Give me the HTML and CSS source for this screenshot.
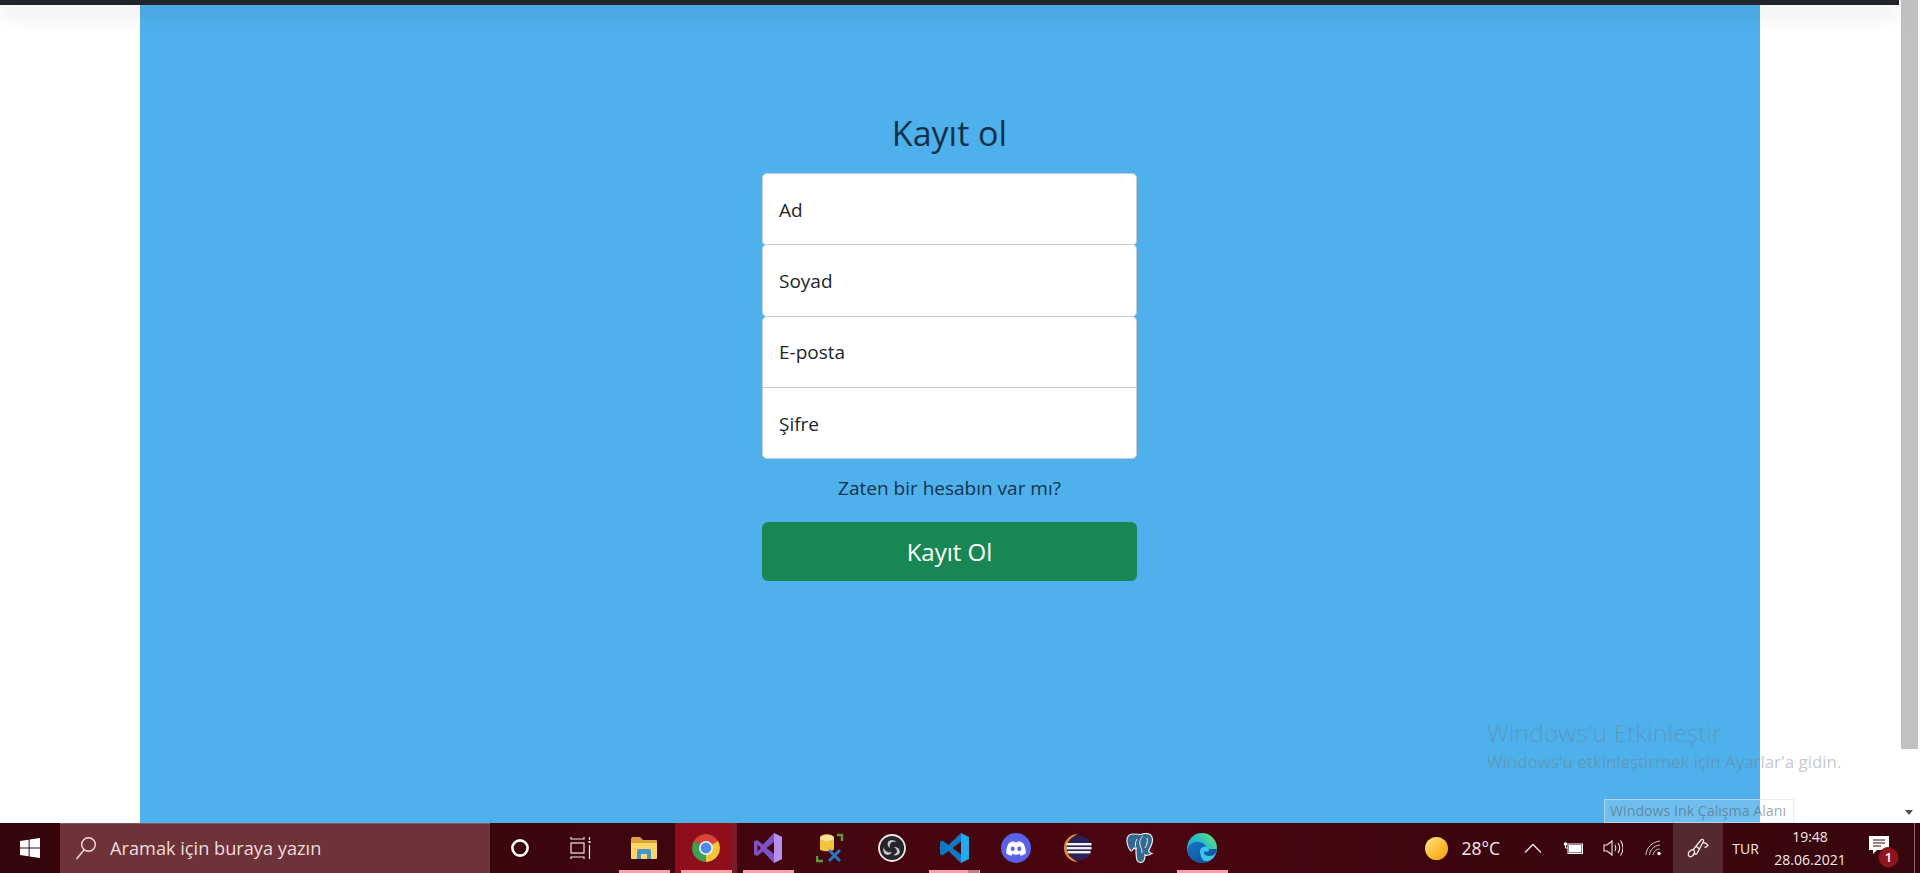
FILE: index.html
```html
<!DOCTYPE html>
<html lang="tr">
<head>
<meta charset="utf-8">
<title>Kayıt ol</title>
<link rel="stylesheet" href="styles.css">
</head>
<body>
<div class="desktop">
  <div class="browser">
    <div class="page">
      <div class="topbar"></div>
      <main class="hero">
        <form class="signup">
          <h1 class="signup-title">Kayıt ol</h1>
          <div class="fields">
            <label class="field">Ad</label>
            <label class="field">Soyad</label>
            <label class="field field-join-bottom">E-posta</label>
            <label class="field field-join-top">Şifre</label>
          </div>
          <a class="signin-link">Zaten bir hesabın var mı?</a>
          <button class="submit" type="button">Kayıt Ol</button>
        </form>
      </main>
    </div>
    <div class="scrollbar">
      <div class="thumb"></div>
      <div class="arrow"></div>
    </div>
  </div>

  <div class="watermark">
    <div class="wm-title">Windows'u Etkinleştir</div>
    <div class="wm-sub">Windows'u etkinleştirmek için Ayarlar'a gidin.</div>
  </div>
  <div class="ink-tip">Windows Ink Çalışma Alanı</div>

  <footer class="taskbar">
    <div class="start">
      <svg width="20" height="20" viewBox="0 0 20 20" fill="#fff"><polygon points="0,3 8.6,1.7 8.6,9.5 0,9.5"/><polygon points="9.6,1.5 20,0 20,9.5 9.6,9.5"/><polygon points="0,10.5 8.6,10.5 8.6,18.3 0,17"/><polygon points="9.6,10.5 20,10.5 20,20 9.6,18.5"/></svg>
    </div>
    <div class="search">
      <svg width="22" height="24" viewBox="0 0 22 24" fill="none" stroke="#f3dfe0" stroke-width="1.4"><circle cx="13.5" cy="8.5" r="6.8"/><line x1="9" y1="14" x2="1.5" y2="23"/></svg>
      <span class="search-text">Aramak için buraya yazın</span>
    </div>
    <div class="tb-tool">
      <svg width="20" height="20" viewBox="0 0 20 20" fill="none" stroke="#fff" stroke-width="2.6"><circle cx="10" cy="10" r="7.6"/></svg>
    </div>
    <div class="tb-tool">
      <svg width="22" height="24" viewBox="0 0 22 24" fill="none" stroke="#f3e6e6" stroke-width="1.2"><path d="M1 1v2h13V1"/><rect x="1" y="7" width="13" height="10"/><path d="M1 23v-2h13v2"/><path d="M19.5 1v3M19.5 9v14"/><path d="M18.5 6h2" stroke-width="2"/></svg>
    </div>

    <div class="tb-app run">
      <svg class="ico" width="28" height="24" viewBox="0 0 28 24"><path d="M1 3a2 2 0 0 1 2-2h7l3 3h13a1 1 0 0 1 1 1v3H1z" fill="#dca23a"/><path d="M1 7h26v15a1 1 0 0 1-1 1H2a1 1 0 0 1-1-1z" fill="#ffd768"/><path d="M7 23v-8a2 2 0 0 1 2-2h10a2 2 0 0 1 2 2v8h-4v-5h-6v5z" fill="#4a96c8"/></svg>
    </div>
    <div class="tb-app active run-multi">
      <svg class="ico" width="28" height="28" viewBox="0 0 28 28"><path d="M14 14L1.9 7A14 14 0 0 1 26.1 7z" fill="#d8443a"/><path d="M14 14L26.1 7A14 14 0 0 1 14 28z" fill="#f6c537"/><path d="M14 14L14 28A14 14 0 0 1 1.9 7z" fill="#3c9f55"/><circle cx="14" cy="14" r="7" fill="#f1f1f1"/><circle cx="14" cy="14" r="5.4" fill="#4d8bea"/></svg>
    </div>
    <div class="tb-app run">
      <svg class="ico" width="30" height="32" viewBox="0 0 30 32"><path fill-rule="evenodd" d="M21 1L10 12.500L4 8L1 9.500V22.500L4 24L10 19.500L21 31L29 27V5zM21 10V22L13.500 16zM4.500 12.500L8 16L4.500 19.500z" fill="#7f52c9"/><polygon points="21,1 29,5 29,27 21,31 21,22 21,10" fill="#b48fee"/></svg>
    </div>
    <div class="tb-app">
      <svg class="ico" width="28" height="30" viewBox="0 0 28 30" fill="none"><path d="M4 5c0-5 14-5 14 0v11c0 3-14 3-14 0z" fill="#f2c43c"/><ellipse cx="11" cy="5" rx="7" ry="3" fill="#f6e2a0"/><path d="M21 2h5v6M1 23v5h6" stroke="#5d9a3c" stroke-width="2.4"/><path d="M13 28l11-11M13 17l11 11" stroke="#2a77c0" stroke-width="3"/></svg>
    </div>
    <div class="tb-app">
      <svg class="ico" width="28" height="28" viewBox="0 0 28 28" fill="none"><circle cx="14" cy="14" r="13" fill="#26252a" stroke="#efe6e2" stroke-width="1.8"/><path d="M14 6a6 6 0 0 1 5 3c-1-1-4-2-6 0s-1 4-1 5a5 5 0 0 1-2-6 5 5 0 0 1 4-2zM21 20a6 6 0 0 1-6 1c2-.5 4-2 4-4s-2-3-3-4a5 5 0 0 1 5 2 5 5 0 0 1 0 5zM6 19a6 6 0 0 1 0-6c0 2 1 4 3.500 5s4 0 4.500-.5a5 5 0 0 1-4 3.500 5 5 0 0 1-4-2z" fill="#c9c9cd"/></svg>
    </div>
    <div class="tb-app run-multi">
      <svg class="ico" width="30" height="32" viewBox="0 0 30 32"><path fill-rule="evenodd" d="M22 1L9.500 13L3.500 8.500L1 10V22L3.500 23.500L9.500 19L22 31V22.500L13.500 16L22 9.500z" fill="#0f78c2"/><polygon points="22,1 30,5 30,27 22,31" fill="#24a8ef"/></svg>
    </div>
    <div class="tb-app">
      <svg class="ico" width="30" height="30" viewBox="0 0 30 30"><circle cx="15" cy="15" r="15" fill="#5a62e8"/><path d="M8 10c2-1 3.500-1.500 5-1.700l.6 1.100c1-.1 1.800-.1 2.800 0l.6-1.100c1.500.2 3 .7 5 1.700 2 3 3 6.500 2.700 10.500-2 1.400-3.500 2-5 2.300l-1.100-1.700c-2.700.7-4.500.7-7.200 0l-1.100 1.700c-1.500-.3-3-.9-5-2.300C5 16.500 6 13 8 10z" fill="#fff"/><ellipse cx="11.700" cy="15.800" rx="2" ry="2.300" fill="#5a62e8"/><ellipse cx="18.300" cy="15.800" rx="2" ry="2.300" fill="#5a62e8"/></svg>
    </div>
    <div class="tb-app">
      <svg class="ico" width="30" height="30" viewBox="0 0 30 30"><path d="M15 1A14 14 0 0 0 15 29 15 15 0 0 1 15 1z" fill="#e98c2c"/><circle cx="16" cy="15" r="12.500" fill="#2a2154"/><rect x="3.500" y="10" width="25" height="2.400" fill="#f2eef2"/><rect x="3.500" y="14" width="25" height="2.400" fill="#f2eef2"/><rect x="4.500" y="18" width="23" height="2.400" fill="#f2eef2"/></svg>
    </div>
    <div class="tb-app">
      <svg class="ico" width="28" height="30" viewBox="0 0 28 30"><path d="M7 1C2 1 .5 5 1 9c.5 3 2 7 3.500 8.500 1.500 1 2.500-1 3.500-2.500 1 1 1.500 1 2 1 0 4 0 8 1 11 1 2 3.500 3 5.500 2s2.500-4 2.500-7c1 1 4 0 7-1.500-2-.5-3-1-3.500-2.500 2-4 4.500-8 4-12-.5-3-3-5.500-7-5.500-2 0-3 .5-4 1C13 1.500 10 1 7 1z" fill="#33688f" stroke="#e9eef2" stroke-width="1.200"/><path d="M11 6c-2 3-2 7-.5 10M17 3c-2 2-4 5-3 9 1 3 2 4 2 8M21 5c1 3 0 7-2 10" fill="none" stroke="#e9eef2" stroke-width="1"/></svg>
    </div>
    <div class="tb-app run">
      <svg class="ico" width="30" height="30" viewBox="0 0 30 30"><defs><linearGradient id="edgeTop" x1="0" y1="1" x2="1" y2="0"><stop offset="0" stop-color="#1a87d0"/><stop offset=".6" stop-color="#28c3c2"/><stop offset="1" stop-color="#7fe06a"/></linearGradient><linearGradient id="edgeLow" x1="0" y1="0" x2="1" y2="1"><stop offset="0" stop-color="#1973c7"/><stop offset="1" stop-color="#0b4c96"/></linearGradient></defs><circle cx="15" cy="15" r="15" fill="url(#edgeTop)"/><path d="M1 19C0 12 6 8 12 9c5 1 8 4 7 7H30c-2 9-9 14-15 14C8 30 2 25 1 19z" fill="url(#edgeLow)"/><path d="M13 18c0-3 3-5 6-4 2 .5 3 2 3 4-2 1-4 0-5 1-1 2 2 4 6 4 2 0 4-1 6-3-2 6-7 9-11 8-3-1-5-6-5-10z" fill="#39c7e6"/></svg>
    </div>

    <div class="tb-spacer"></div>

    <div class="weather">
      <span class="sun"></span>
      <span class="temp">28°C</span>
    </div>
    <div class="tray-icon">
      <svg width="18" height="10" viewBox="0 0 18 10" fill="none" stroke="#f3e6e6" stroke-width="1.300"><polyline points="1,9.500 9,1.500 17,9.500"/></svg>
    </div>
    <div class="tray-icon">
      <svg width="20" height="14" viewBox="0 0 20 14" fill="none" stroke="#fff"><rect x="5" y="3" width="14.500" height="9.500" stroke-width="1"/><rect x="6" y="4" width="12.500" height="7.500" fill="#fff" stroke="none"/><circle cx="2.500" cy="3" r="1.800" fill="#fff" stroke="none"/><path d="M2.500 4v3h2.500" stroke-width="1"/></svg>
    </div>
    <div class="tray-icon">
      <svg width="20" height="18" viewBox="0 0 20 18" fill="none" stroke="#f3e6e6" stroke-width="1.100"><path d="M1 6h3l5-4v14l-5-4H1z"/><path d="M12 6c1 2 1 4 0 6M15 4c2 3 2 7 0 10M17.500 1.500c3 4.500 3 10.500 0 15"/></svg>
    </div>
    <div class="tray-icon">
      <svg width="17" height="16" viewBox="0 0 17 16" fill="none" stroke="#d9c6c8" stroke-width="1"><path d="M1 15C1 8 7 2 15 1M4.500 15C5 10 9 5.500 15 5M8 15c.5-3 3-6 6.500-6"/><circle cx="14" cy="13.500" r="1.700" fill="#fff" stroke="none"/></svg>
    </div>
    <div class="tray-pen">
      <svg width="22" height="20" viewBox="0 0 22 20" fill="none" stroke="#f5eaea" stroke-width="1.300"><path d="M7.500 14.500C7 17 4.500 19.500 2.500 18.500S1 14 3.500 12.500 8 12 7.500 14.500z"/><path d="M6 12L14 2c1-1.300 3-.5 2.500 1.200L10 15.500c-1 1.500-2.500.5-2.500-1M9.500 8.500l3.500 3"/><path d="M16 4.500c2.500.3 4 1.300 5 2.800-.8 1.200-2 1.900-3.500 2.200"/></svg>
    </div>
    <div class="tray-lang">TUR</div>
    <div class="clock">
      <span>19:48</span>
      <span>28.06.2021</span>
    </div>
    <div class="notify">
      <svg width="21" height="20" viewBox="0 0 21 20"><path d="M0 0h20v14H8l-4 4v-4H0z" fill="#fff"/><path d="M4 4h12M4 7h12M4 10h8" stroke="#3a060d" stroke-width="1"/></svg>
      <span class="badge">1</span>
    </div>
    <div class="tb-edge"></div>
    <div class="tb-end"></div>
  </footer>
</div>
</body>
</html>
```

FILE: styles.css
```css
* { box-sizing: border-box; }

html, body {
  margin: 0;
  height: 873px;
  overflow: hidden;
  background: #fff;
  font-family: "Open Sans", "Noto Sans", sans-serif;
}

.desktop {
  position: relative;
  display: flex;
  flex-direction: column;
  height: 873px;
}

.browser {
  flex: 1;
  display: flex;
  min-height: 0;
}

.page {
  flex: 1;
  display: flex;
  flex-direction: column;
  min-width: 0;
}

.topbar {
  position: relative;
  z-index: 2;
  height: 5px;
  background: #212529;
  box-shadow: 0 8px 20px rgba(0, 0, 0, 0.2);
}

.hero {
  flex: 1;
  margin: 0 139px 0 140px;
  padding: 107px 1px 0 0;
  background: #4fb1ec;
  display: flex;
  justify-content: center;
}

.signup {
  width: 375px;
  display: flex;
  flex-direction: column;
  align-items: stretch;
}

.signup-title {
  margin: 0 0 19px;
  font-size: 34px;
  line-height: 42px;
  font-weight: 400;
  text-align: center;
  color: #13304a;
}

.field {
  display: flex;
  align-items: center;
  height: 72.5px;
  margin-top: -1.25px;
  padding: 1px 16px 0;
  background: #fff;
  border: 1px solid #c6ccd2;
  border-radius: 5px;
  font-size: 19px;
  color: #212529;
}

.field:first-child { margin-top: 0; }
.field-join-bottom { border-bottom-left-radius: 0; border-bottom-right-radius: 0; }
.field-join-top { border-top-left-radius: 0; border-top-right-radius: 0; }

.signin-link {
  margin-top: 14px;
  height: 30px;
  line-height: 30px;
  font-size: 19px;
  text-align: center;
  color: #15324e;
}

.submit {
  margin-top: 19px;
  height: 59px;
  border: 0;
  border-radius: 6px;
  background: #198754;
  color: #fff;
  font-family: inherit;
  font-size: 24px;
}

.scrollbar {
  width: 21px;
  padding: 0 2px 8px;
  display: flex;
  flex-direction: column;
  justify-content: space-between;
  align-items: flex-start;
}

.thumb {
  width: 17px;
  height: 749px;
  background: #c1c1c1;
}

.arrow {
  width: 0;
  height: 0;
  margin-left: 4px;
  border-left: 4.500px solid transparent;
  border-right: 4.500px solid transparent;
  border-top: 5px solid #505050;
}

.watermark {
  position: absolute;
  left: 1487px;
  top: 716px;
  z-index: 3;
  color: rgba(110, 120, 130, 0.42);
  white-space: nowrap;
}

.wm-title {
  font-size: 24.700px;
  font-weight: 300;
  line-height: 34px;
}

.wm-sub {
  margin-top: 1px;
  font-size: 16.900px;
  line-height: 22px;
}

.ink-tip {
  position: absolute;
  left: 1604px;
  top: 799px;
  width: 190px;
  height: 24px;
  z-index: 3;
  padding-left: 5px;
  line-height: 22px;
  font-size: 14.200px;
  white-space: nowrap;
  color: rgba(90, 100, 110, 0.6);
  background: rgba(255, 255, 255, 0.18);
  border: 1px solid rgba(225, 225, 225, 0.6);
}

.taskbar {
  flex: 0 0 50px;
  display: flex;
  align-items: stretch;
  color: #f6e9ea;
  background: linear-gradient(90deg, #35060c 0%, #3d060e 30%, #4b0511 60%, #3d060e 75%, #37060c 100%);
}

.start {
  flex: 0 0 60px;
  display: flex;
  align-items: center;
  justify-content: center;
  padding-bottom: 1px;
}

.search {
  flex: 0 0 430px;
  display: flex;
  align-items: center;
  gap: 13px;
  padding: 0 0 1px 15px;
  background: #6d3339;
  border-top: 1px solid #85585d;
}

.search-text {
  font-size: 18.200px;
  color: #f0dcdd;
  white-space: nowrap;
}

.tb-tool {
  flex: 0 0 61.500px;
  display: flex;
  align-items: center;
  justify-content: center;
  padding-right: 2px;
}

.tb-app {
  position: relative;
  flex: 0 0 62px;
  display: flex;
  align-items: center;
  justify-content: center;
}

.tb-app.active { background: #8e0f1b; }

.run::after,
.run-multi::after {
  content: "";
  position: absolute;
  left: 6px;
  bottom: 0;
  width: 51px;
  height: 3px;
  background: #ff9ea4;
}

.run-multi::before {
  content: "";
  position: absolute;
  left: 45px;
  bottom: 0;
  width: 11px;
  height: 3px;
  background: #c77c84;
  z-index: 1;
}

.tb-app.active.run-multi::before { left: 57px; width: 5px; height: 50px; background: #7a1b25; }

.tb-spacer { flex: 1; }

.weather {
  flex: 0 0 102.500px;
  display: flex;
  align-items: center;
  gap: 14px;
  padding-left: 14px;
}

.sun {
  width: 23px;
  height: 23px;
  border-radius: 50%;
  background: linear-gradient(135deg, #ffe07a 10%, #fdb92e 60%, #f59a12 100%);
}

.temp { font-size: 17.500px; }

.tray-icon {
  flex: 0 0 40px;
  display: flex;
  align-items: center;
  justify-content: center;
}

.tray-pen {
  flex: 0 0 50px;
  display: flex;
  align-items: center;
  justify-content: center;
  background: rgba(255, 255, 255, 0.14);
}

.tray-lang {
  flex: 0 0 45px;
  display: flex;
  align-items: center;
  justify-content: center;
  font-size: 14px;
}

.clock {
  flex: 0 0 84px;
  display: flex;
  flex-direction: column;
  align-items: center;
  justify-content: center;
  gap: 3px;
  font-size: 14px;
  line-height: 20px;
}

.notify {
  position: relative;
  flex: 0 0 62px;
  display: flex;
  align-items: center;
  justify-content: center;
  padding: 0 7px 4px 0;
}

.badge {
  position: absolute;
  left: 26px;
  top: 24px;
  width: 21px;
  height: 21px;
  border-radius: 50%;
  background: #8e1620;
  border: 1px solid #5a0c14;
  text-align: center;
  font-size: 13px;
  font-weight: 600;
  line-height: 19px;
  color: #fff;
}

.tb-edge {
  flex: 0 0 1px;
  background: #8a6a6e;
}

.tb-end { flex: 0 0 5px; }
```
